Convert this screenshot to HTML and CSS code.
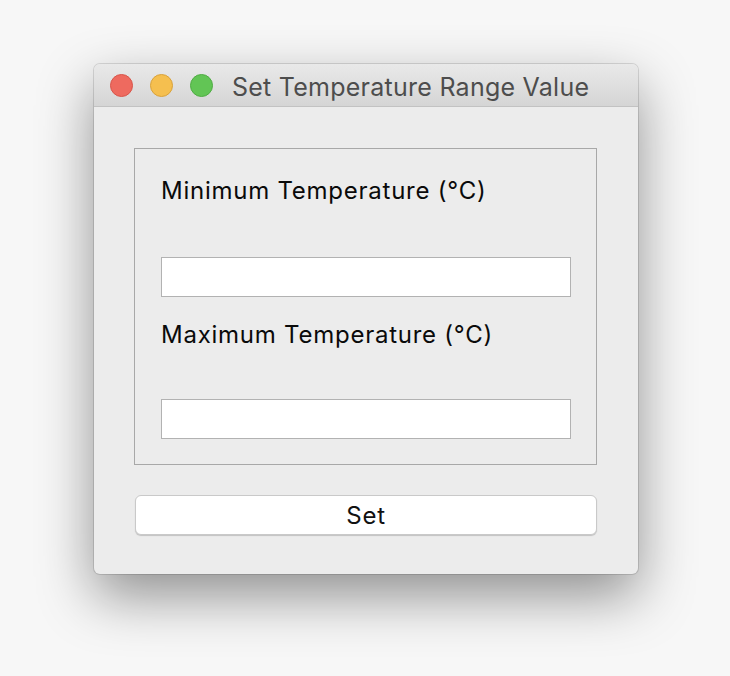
FILE: index.html
```html
<!DOCTYPE html>
<html>
<head>
<meta charset="utf-8">
<link rel="stylesheet" href="styles.css">
</head>
<body>
<div class="stage">
  <div class="window">
    <div class="titlebar">
      <div class="lights">
        <span class="light red"></span>
        <span class="light yellow"></span>
        <span class="light green"></span>
      </div>
      <div class="title">Set Temperature Range Value</div>
    </div>
    <div class="content">
      <div class="group">
        <div class="label">Minimum Temperature (°C)</div>
        <input class="field" type="text">
        <div class="label second">Maximum Temperature (°C)</div>
        <input class="field" type="text">
      </div>
      <button class="btn">Set</button>
    </div>
  </div>
</div>
</body>
</html>
```

FILE: styles.css
```css
html, body {
  margin: 0;
  padding: 0;
  background: #f7f7f7;
  width: 730px;
  height: 676px;
  overflow: hidden;
  font-family: "Inter", "Liberation Sans", Arial, sans-serif;
}
.stage {
  padding: 64px 0 0 94px;
}
.window {
  width: 544px;
  height: 510px;
  background: #ececec;
  border-radius: 6px;
  box-shadow: 0 0 0 1px rgba(0,0,0,0.12), 0 22px 55px rgba(0,0,0,0.42);
  overflow: hidden;
  display: flex;
  flex-direction: column;
}
.titlebar {
  height: 42px;
  border-bottom: 1px solid #c2c2c2;
  background: linear-gradient(#e9e9e9, #d5d5d5);
  display: flex;
  align-items: center;
  padding-left: 16px;
}
.lights {
  display: flex;
  gap: 17px;
}
.light {
  width: 23px;
  height: 23px;
  border-radius: 50%;
  box-sizing: border-box;
}
.red { background: #ee6a5f; border: 1px solid #d8554a; }
.yellow { background: #f5bf4f; border: 1px solid #d9a23b; }
.green { background: #62c555; border: 1px solid #4fac43; }
.title {
  margin-left: 19px;
  margin-top: 3px;
  font-size: 25px;
  letter-spacing: 0.25px;
  color: #4d4d4d;
}
.content {
  padding: 41px 41px 0 40px;
  display: flex;
  flex-direction: column;
}
.group {
  border: 1px solid #a8a8a8;
  height: 315px;
  padding: 0 25px 0 26px;
  display: flex;
  flex-direction: column;
}
.label {
  font-size: 24px;
  letter-spacing: 0.75px;
  color: #0a0a0a;
  margin-top: 27px;
  height: 29px;
  line-height: 29px;
}
.label.second {
  margin-top: 23px;
}
.field {
  margin-top: 52px;
  height: 40px;
  box-sizing: border-box;
  border: 1px solid #b2b2b2;
  background: #fff;
  padding: 0;
  width: 410px;
}
.label.second + .field {
  margin-top: 50px;
}
.btn {
  margin-top: 30px;
  margin-left: 1px;
  height: 40px;
  border: 1px solid #c9c9c9;
  border-radius: 6px;
  background: #fff;
  box-shadow: 0 1px 1px rgba(0,0,0,0.18);
  font-family: inherit;
  font-size: 24px;
  letter-spacing: 0.75px;
  color: #111;
  padding: 0;
}
```
